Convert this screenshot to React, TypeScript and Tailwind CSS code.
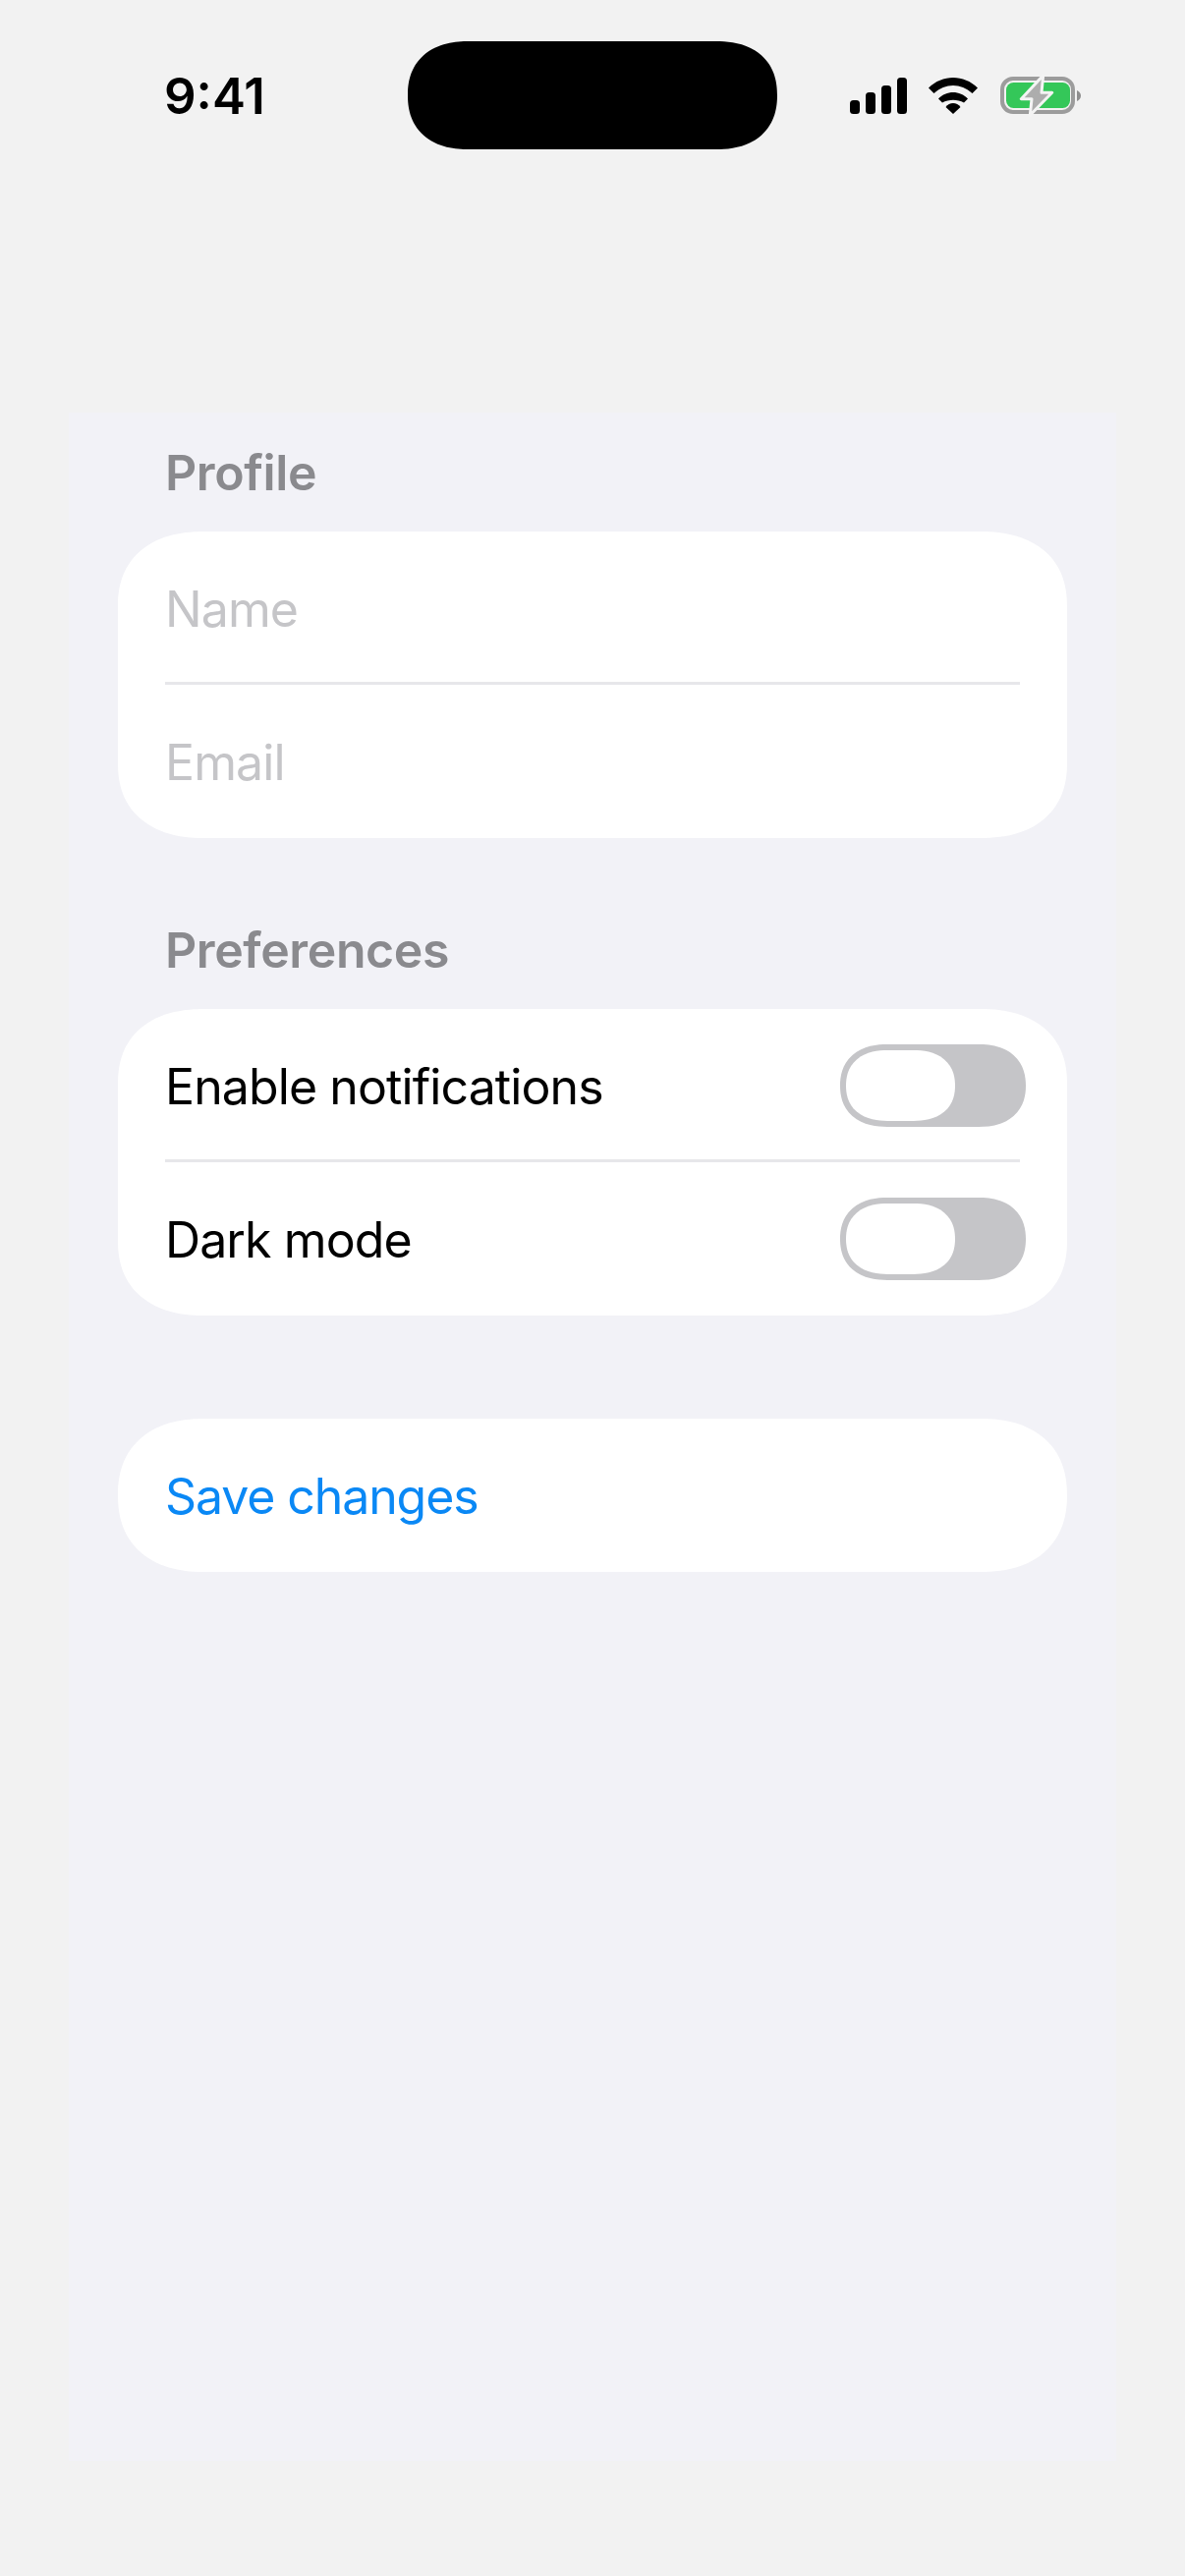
function StatusIcons() {
  return (
    <div className="flex items-center">
      <svg width="58" height="37" viewBox="0 0 58 37" className="block">
        <rect x="0" y="23" width="10" height="14" rx="3.5" fill="#000" />
        <rect x="16" y="15" width="10" height="22" rx="3.5" fill="#000" />
        <rect x="32" y="8" width="10" height="29" rx="3.5" fill="#000" />
        <rect x="48" y="0" width="10" height="37" rx="3.5" fill="#000" />
      </svg>
      <svg width="50" height="37" viewBox="0 0 50 37" className="ml-[22px] block">
        <path d="M0 10.5C14 -3.5 36 -3.5 50 10.5L44.5 16C33 5.33 17 5.33 5.5 16Z" fill="#000" />
        <path d="M10 21.5C18 12.8 32 12.8 40 21.5L36 25.5C29.5 21.8 20.5 21.8 14 25.5Z" fill="#000" />
        <path d="M17.5 30C21 24.67 29 24.67 32.5 30L25 37Z" fill="#000" />
      </svg>
      <svg width="82" height="43" viewBox="0 0 82 43" className="ml-[23px] block">
        <rect x="2" y="4" width="72" height="34" rx="11" fill="none" stroke="#9c9c9c" strokeWidth="4" />
        <rect x="6" y="8" width="65" height="26" rx="7.5" fill="#34c759" />
        <path d="M78 16C80.5 17 82 19 82 21.5C82 24 80.5 26 78 27Z" fill="#8e8e8e" />
        <path d="M43.7 0.7L21.3 24.7H32L30.3 41.3L52.7 18.3H42Z" fill="#adadad" stroke="#f4f4f4" strokeWidth="3" strokeLinejoin="round" />
      </svg>
    </div>
  )
}

function Toggle() {
  return (
    <div className="flex h-[84px] w-[189px] items-center rounded-[48px/42px] bg-[#c5c5c8] pl-[6px] [corner-shape:superellipse(1.2)]">
      <div className="h-[72px] w-[111px] rounded-[42px/36px] bg-white [corner-shape:superellipse(1.2)]" />
    </div>
  )
}

function SectionLabel({ children }: { children: string }) {
  return <p className="mb-[29px] pl-[48px] text-[50px] leading-[62px] font-semibold tracking-[-0.4px] text-[#8a8a8e]">{children}</p>
}

function Divider() {
  return <div className="mt-[-3px] mr-[48px] h-[3px] bg-[#e7e7ea]" />
}

function Row({ children }: { children: React.ReactNode }) {
  return <div className="flex h-[156px] items-center justify-between text-[50px] tracking-[-0.9px] text-black">{children}</div>
}

export default function App() {
  return (
    <div className="h-[2622px] bg-[#f2f2f2] text-black [font-family:Inter,'Liberation_Sans',sans-serif]">
      <div className="flex h-[420px] items-start pt-[42px]">
        <span className="mt-[25px] ml-[167px] w-[248px] text-[51px] leading-[62px] font-semibold">9:41</span>
        <div className="h-[110px] w-[376px] rounded-[62px/55px] bg-black [corner-shape:superellipse(1.2)]" />
        <div className="mt-[34px] ml-[74px]">
          <StatusIcons />
        </div>
      </div>
      <div className="ml-[70px] h-[2085px] w-[1066px] bg-[#f2f2f7] px-[50px] pt-[30px]">
        <SectionLabel>Profile</SectionLabel>
        <div className="rounded-[88px/76px] bg-white pl-[48px] [corner-shape:superellipse(1.2)]">
          <Row><span className="pt-[3px] text-[#c5c5c8]">Name</span></Row>
          <Divider />
          <Row><span className="pt-[3px] text-[#c5c5c8]">Email</span></Row>
        </div>
        <div className="mt-[83px]">
          <SectionLabel>Preferences</SectionLabel>
        </div>
        <div className="rounded-[88px/76px] bg-white pl-[48px] [corner-shape:superellipse(1.2)]">
          <Row><span className="pt-[3px]">Enable notifications</span><div className="mr-[42px]"><Toggle /></div></Row>
          <Divider />
          <Row><span className="pt-[3px]">Dark mode</span><div className="mr-[42px]"><Toggle /></div></Row>
        </div>
        <div className="mt-[105px] flex h-[156px] items-center rounded-[88px/78px] bg-white pt-[3px] pl-[48px] text-[50px] tracking-[-1.1px] text-[#0a88f5] [corner-shape:superellipse(1.2)]">
          Save changes
        </div>
      </div>
    </div>
  )
}
